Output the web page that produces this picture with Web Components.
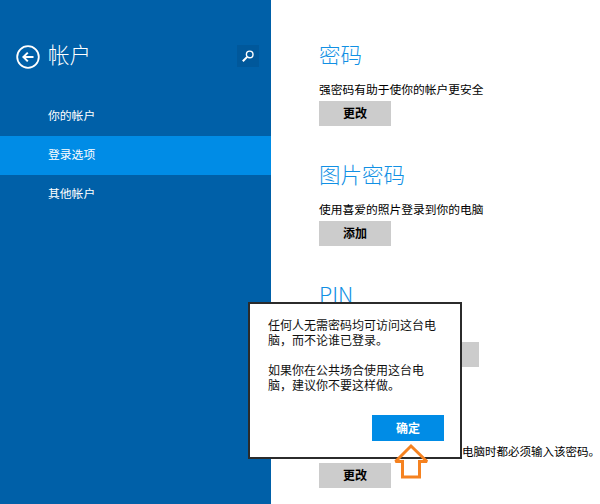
<!DOCTYPE html>
<html lang="zh-CN">
<head>
<meta charset="utf-8">
<style>
  html, body { margin: 0; height: 100%; background: #fff; }
  body { font-family: "Noto Sans CJK SC", "Liberation Sans", sans-serif; overflow: hidden; }
</style>
</head>
<body>
<settings-page>
  <settings-nav slot="nav" title-text="帐户">
    <nav-item>你的帐户</nav-item>
    <nav-item selected>登录选项</nav-item>
    <nav-item>其他帐户</nav-item>
  </settings-nav>

  <option-section heading="密码" desc="强密码有助于使你的帐户更安全">
    <metro-button>更改</metro-button>
  </option-section>
  <option-section heading="图片密码" desc="使用喜爱的照片登录到你的电脑">
    <metro-button>添加</metro-button>
  </option-section>
  <option-section heading="PIN" kind="pin">
    <metro-button wide></metro-button>
  </option-section>
  <option-section desc="电脑时都必须输入该密码。" kind="last">
    <metro-button>更改</metro-button>
  </option-section>

  <confirm-dialog slot="overlay">
    <p>任何人无需密码均可访问这台电<br>脑<span class="comma">，</span>而不论谁已登录。</p>
    <p>如果你在公共场合使用这台电<br>脑<span class="comma">，</span>建议你不要这样做。</p>
  </confirm-dialog>
</settings-page>

<script>
class SettingsPage extends HTMLElement {
  constructor() {
    super();
    this.attachShadow({ mode: "open" });
    this.shadowRoot.innerHTML = `
      <style>
        :host { display: block; position: relative; width: 600px; height: 504px; overflow: hidden; }
        .layout { display: grid; grid-template-columns: 271px 329px; height: 100%; }
        .content { padding: 41px 0 0 48px; min-width: 0; }
      </style>
      <div class="layout">
        <slot name="nav"></slot>
        <main class="content"><slot></slot></main>
      </div>
      <slot name="overlay"></slot>
    `;
  }
}

class SettingsNav extends HTMLElement {
  constructor() {
    super();
    this.attachShadow({ mode: "open" });
    const title = this.getAttribute("title-text") || "";
    this.shadowRoot.innerHTML = `
      <style>
        :host { display: block; background: #0060a8; height: 504px; }
        header {
          display: flex;
          align-items: center;
          height: 22px;
          padding: 45px 12px 0 16px;
        }
        .back { width: 24px; height: 24px; flex: none; margin-top: 2px; }
        h1 {
          margin: 0 0 4px 8px;
          flex: 1;
          font: 300 21.5px/22px "Noto Sans CJK SC", sans-serif;
          color: #fff;
        }
        .search {
          width: 22px;
          height: 22px;
          background: #00589b;
          display: flex;
          align-items: center;
          justify-content: center;
        }
        .list { padding-top: 30px; }
      </style>
      <header>
        <svg class="back" viewBox="0 0 24 24" fill="none" stroke="#fff">
          <circle cx="12" cy="12" r="10.8" stroke-width="1.8"/>
          <path d="M7.5 12H17.5M11.8 7.6L7.4 12l4.4 4.4" stroke-width="2"/>
        </svg>
        <h1>${title}</h1>
        <div class="search">
          <svg width="14" height="14" viewBox="0 0 14 14" fill="none" stroke="#fff">
            <circle cx="8.7" cy="5.4" r="3.3" stroke-width="1.4"/>
            <path d="M6.2 7.9L1.8 12.3" stroke-width="2"/>
          </svg>
        </div>
      </header>
      <div class="list"><slot></slot></div>
    `;
  }
}

class NavItem extends HTMLElement {
  constructor() {
    super();
    this.attachShadow({ mode: "open" });
    this.shadowRoot.innerHTML = `
      <style>
        :host {
          display: block;
          height: 39px;
          line-height: 36px;
          padding-left: 48px;
          font-size: 11.8px;
          color: #fff;
        }
        :host([selected]) { background: #008ce6; }
      </style>
      <slot></slot>
    `;
  }
}

class OptionSection extends HTMLElement {
  constructor() {
    super();
    this.attachShadow({ mode: "open" });
    const heading = this.getAttribute("heading");
    const desc = this.getAttribute("desc");
    this.shadowRoot.innerHTML = `
      <style>
        :host { display: block; height: 120px; }
        :host([kind="pin"]) { height: 151px; }
        h2 {
          margin: 0;
          height: 29px;
          font: 300 21.5px/25px "Noto Sans CJK SC", sans-serif;
          color: #1190e4;
        }
        p {
          margin: 11px 0 4px;
          height: 16px;
          font-size: 11.75px;
          line-height: 16px;
          color: #000;
          white-space: nowrap;
        }
        :host([kind="pin"]) p { height: 0; margin: 0 0 32px; }
        :host([kind="last"]) p { padding-left: 143px; font-size: 11.5px; }
      </style>
      ${heading ? `<h2>${heading}</h2>` : ""}
      <p>${desc || ""}</p>
      <slot></slot>
    `;
  }
}

class MetroButton extends HTMLElement {
  constructor() {
    super();
    this.attachShadow({ mode: "open" });
    this.shadowRoot.innerHTML = `
      <style>
        :host {
          display: block;
          width: 72px;
          height: 25px;
          background: #cccccc;
          color: #000;
          font-size: 12px;
          font-weight: 700;
          line-height: 24px;
          text-align: center;
        }
        :host([wide]) { width: 160px; }
      </style>
      <slot></slot>
    `;
  }
}

class ConfirmDialog extends HTMLElement {
  constructor() {
    super();
    this.attachShadow({ mode: "open" });
    this.shadowRoot.innerHTML = `
      <style>
        :host {
          display: block;
          position: absolute;
          left: 248px;
          top: 302px;
          width: 214px;
          height: 157px;
          box-sizing: border-box;
          background: #fff;
          border: 2px solid #2b2b2b;
          padding: 13px 16px 0 18px;
          font-size: 12px;
          line-height: 15.3px;
          color: #111;
        }
        ::slotted(p) { margin: 0 0 14.4px; }
        .text { height: 98px; white-space: nowrap; }
        .ok {
          display: block;
          margin: 0 0 0 104px;
          width: 72px;
          height: 26px;
          background: #008ce6;
          color: #fff;
          font-weight: 700;
          line-height: 26px;
          text-align: center;
        }
        .arrow { position: absolute; left: 141px; top: 139px; overflow: visible; }
      </style>
      <div class="text"><slot></slot></div>
      <div class="ok">确定</div>
      <svg class="arrow" width="40" height="36" viewBox="0 0 40 36" fill="none">
        <path d="M20 3L36 18.5H28.5V34H11.5V18.5H4.5Z" stroke="#f58220" stroke-width="3" stroke-miterlimit="2.5"/>
      </svg>
    `;
    // slotted rules can't reach the comma inside <p>, so set its font here
    this.querySelectorAll(".comma").forEach((c) => {
      c.style.fontFamily = '"Noto Sans CJK TC", sans-serif';
    });
  }
}

customElements.define("settings-page", SettingsPage);
customElements.define("settings-nav", SettingsNav);
customElements.define("nav-item", NavItem);
customElements.define("option-section", OptionSection);
customElements.define("metro-button", MetroButton);
customElements.define("confirm-dialog", ConfirmDialog);
</script>
</body>
</html>
